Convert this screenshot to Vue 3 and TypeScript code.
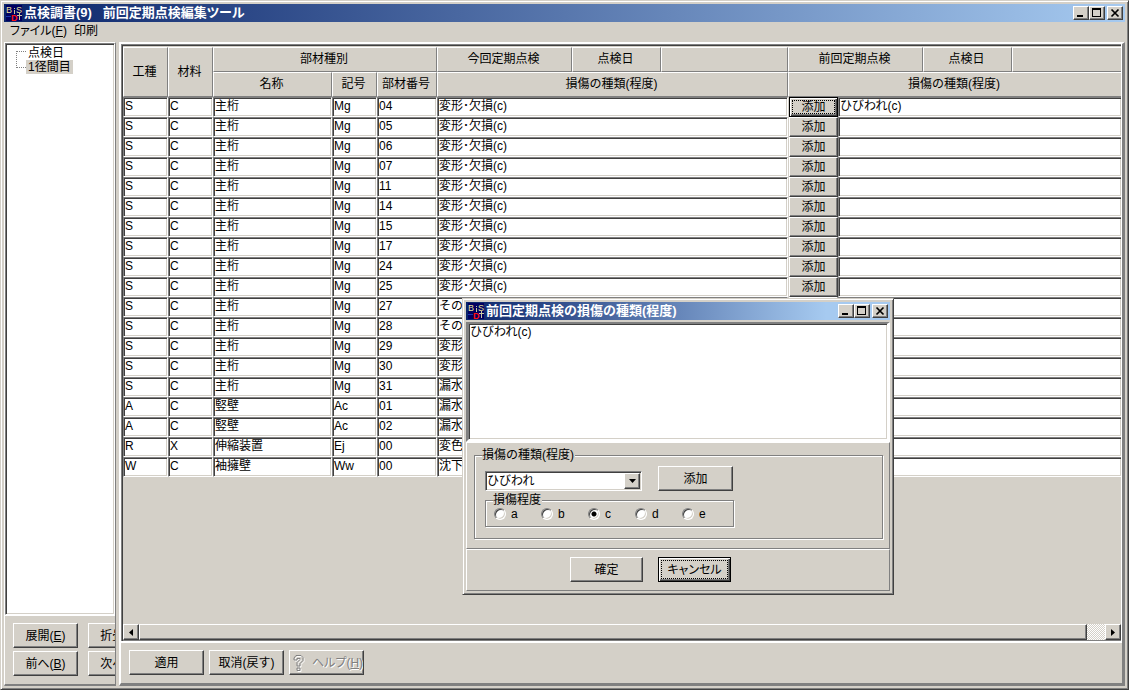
<script setup lang="ts">
import { ref } from 'vue'

interface Row {
  work: string
  material: string
  name: string
  sign: string
  no: string
  current: string
  previous: string
}

const girder = (no: string, current: string, previous = ''): Row => ({
  work: 'S', material: 'C', name: '主桁', sign: 'Mg', no, current, previous,
})

const rows: Row[] = [
  girder('04', '変形･欠損(c)', 'ひびわれ(c)'),
  ...['05', '06', '07', '11', '14', '15', '17', '24', '25'].map((n) => girder(n, '変形･欠損(c)')),
  girder('27', 'その他'),
  girder('28', 'その他'),
  girder('29', '変形･欠損(c)'),
  girder('30', '変形･欠損(c)'),
  girder('31', '漏水･滞水'),
  { work: 'A', material: 'C', name: '竪壁', sign: 'Ac', no: '01', current: '漏水･滞水', previous: '' },
  { work: 'A', material: 'C', name: '竪壁', sign: 'Ac', no: '02', current: '漏水･滞水', previous: '' },
  { work: 'R', material: 'X', name: '伸縮装置', sign: 'Ej', no: '00', current: '変色･劣化', previous: '' },
  { work: 'W', material: 'C', name: '袖擁壁', sign: 'Ww', no: '00', current: '沈下･移動', previous: '' },
]

const widths = [45, 45, 119, 45, 60, 135, 89, 127, 50, 85, 89]
const grades = ['a', 'b', 'c', 'd', 'e']
const grade = ref('c')
const damage = ref('ひびわれ')
const note = ref('ひびわれ(c)')
</script>

<template>
  <main class="window app">
    <header class="title">
      <svg class="logo" viewBox="0 0 16 16" aria-hidden="true">
        <rect width="16" height="16" fill="#000060" />
        <text x="0" y="8" fill="#e4e09a">B</text>
        <text x="10" y="8" fill="#e4e09a">S</text>
        <path d="M8.500 3v1M8.500 5v4M13.500 8v7M11 10.500h5" stroke="#c8c8a0" fill="none" />
        <path d="M0 11.500h5" stroke="#1838b0" />
        <text x="5" y="16" class="red" fill="#ff1010">D</text>
      </svg>
      <h1>点検調書(9)&nbsp;&nbsp; 前回定期点検編集ツール</h1>
      <div class="controls">
        <button type="button" aria-label="最小化"><svg viewBox="0 0 12 10"><path d="M2 8h6" stroke-width="2" /></svg></button>
        <button type="button" aria-label="最大化"><svg viewBox="0 0 12 10"><path d="M1 1h9M1.5 1v8M9.5 1v8M1 8.5h9" /><path d="M1 1h9" stroke-width="2" /></svg></button>
        <button type="button" aria-label="閉じる" class="close"><svg viewBox="0 0 12 10"><path d="M2.5 1.5l7 7M9.5 1.5l-7 7" stroke-width="1.7" /></svg></button>
      </div>
    </header>

    <nav class="menu">
      <button type="button">ファイル(<u>F</u>)</button>
      <button type="button">印刷</button>
    </nav>

    <div class="body">
      <aside class="side">
        <div class="tree">
          <span class="branch"></span>
          <ul>
            <li>点検日</li>
            <li class="selected">1径間目</li>
          </ul>
        </div>
        <div class="side-buttons">
          <button type="button" class="btn">展開(<u>E</u>)</button>
          <button type="button" class="btn">折畳(<u>C</u>)</button>
          <button type="button" class="btn">前へ(<u>B</u>)</button>
          <button type="button" class="btn">次へ(<u>N</u>)</button>
        </div>
      </aside>

      <section class="content">
        <div class="grid">
          <div class="sheet">
            <table>
              <colgroup>
                <col v-for="(w, i) in widths" :key="i" :style="{ width: w + 'px' }" />
                <col />
              </colgroup>
              <thead>
                <tr>
                  <th rowspan="2">工種</th>
                  <th rowspan="2">材料</th>
                  <th colspan="3">部材種別</th>
                  <th>今回定期点検</th>
                  <th>点検日</th>
                  <th></th>
                  <th colspan="2">前回定期点検</th>
                  <th>点検日</th>
                  <th class="last"></th>
                </tr>
                <tr>
                  <th>名称</th>
                  <th>記号</th>
                  <th>部材番号</th>
                  <th colspan="3">損傷の種類(程度)</th>
                  <th colspan="4" class="last">損傷の種類(程度)</th>
                </tr>
              </thead>
              <tbody>
                <tr v-for="(r, i) in rows" :key="i">
                  <td>{{ r.work }}</td>
                  <td>{{ r.material }}</td>
                  <td>{{ r.name }}</td>
                  <td>{{ r.sign }}</td>
                  <td>{{ r.no }}</td>
                  <td colspan="3">{{ r.current }}</td>
                  <td class="action">
                    <button type="button" class="btn" :class="{ focused: i === 0 }">添加</button>
                  </td>
                  <td colspan="3" class="last">{{ r.previous }}</td>
                </tr>
              </tbody>
            </table>
          </div>
          <div class="scroll">
            <button type="button" class="btn arrow" aria-label="左へ"><svg viewBox="0 0 4 7"><path d="M4 0v7L0 3.5z" /></svg></button>
            <div class="thumb"></div>
            <div class="track"></div>
            <button type="button" class="btn arrow" aria-label="右へ"><svg viewBox="0 0 4 7"><path d="M0 0v7l4-3.5z" /></svg></button>
          </div>
        </div>
        <footer class="actions">
          <button type="button" class="btn">適用</button>
          <button type="button" class="btn">取消(戻す)</button>
          <button type="button" class="btn help" disabled>
            <svg viewBox="0 0 14 18" aria-hidden="true">
              <path d="M2 6V4l2-2.500h5l2 2v3L8 9.500V12H5V8.500l3-3V4.500H5V6zM5 14h3v2.500H5z" fill="none" stroke="#fff" transform="translate(1 1)" />
              <path d="M2 6V4l2-2.500h5l2 2v3L8 9.500V12H5V8.500l3-3V4.500H5V6zM5 14h3v2.500H5z" fill="none" stroke="#808080" />
            </svg>
            <span>ヘルプ(<u>H</u>)</span>
          </button>
        </footer>
      </section>
    </div>

    <section class="window dialog" role="dialog" aria-labelledby="dialog-title">
      <header class="title">
        <svg class="logo" viewBox="0 0 16 16" aria-hidden="true">
          <rect width="16" height="16" fill="#000060" />
          <text x="0" y="8" fill="#e4e09a">B</text>
          <text x="10" y="8" fill="#e4e09a">S</text>
          <path d="M8.500 3v1M8.500 5v4M13.500 8v7M11 10.500h5" stroke="#c8c8a0" fill="none" />
          <path d="M0 11.500h5" stroke="#1838b0" />
          <text x="5" y="16" class="red" fill="#ff1010">D</text>
        </svg>
        <h2 id="dialog-title">前回定期点検の損傷の種類(程度)</h2>
        <div class="controls">
          <button type="button" aria-label="最小化"><svg viewBox="0 0 12 10"><path d="M2 8h6" stroke-width="2" /></svg></button>
          <button type="button" aria-label="最大化"><svg viewBox="0 0 12 10"><path d="M1 1h9M1.5 1v8M9.5 1v8M1 8.5h9" /><path d="M1 1h9" stroke-width="2" /></svg></button>
          <button type="button" aria-label="閉じる" class="close"><svg viewBox="0 0 12 10"><path d="M2.5 1.5l7 7M9.5 1.5l-7 7" stroke-width="1.7" /></svg></button>
        </div>
      </header>
      <textarea v-model="note" aria-label="損傷の種類(程度)"></textarea>
      <div class="panel">
        <fieldset class="outer">
          <legend>損傷の種類(程度)</legend>
          <div class="pick">
            <div class="combo">
              <select v-model="damage" aria-label="損傷の種類">
                <option>ひびわれ</option>
              </select>
              <span class="drop"><svg viewBox="0 0 7 4"><path d="M0 0h7L3.500 4z" /></svg></span>
            </div>
            <button type="button" class="btn">添加</button>
          </div>
          <fieldset class="inner">
            <legend>損傷程度</legend>
            <label v-for="g in grades" :key="g">
              <input v-model="grade" type="radio" name="grade" :value="g" />{{ g }}
            </label>
          </fieldset>
        </fieldset>
      </div>
      <div class="panel buttons">
        <button type="button" class="btn">確定</button>
        <button type="button" class="btn focused">キャンセル</button>
      </div>
    </section>
  </main>
</template>

<style>
body {
  margin: 0;
  background: #d4d0c8;
}
</style>

<style scoped>
* {
  box-sizing: border-box;
}
.window {
  display: flex;
  flex-direction: column;
  padding: 3px;
  background: #d4d0c8;
  border: 1px solid;
  border-color: #d4d0c8 #404040 #404040 #d4d0c8;
  box-shadow: inset 1px 1px #fff, inset -1px -1px #808080;
  font: 12px/16px "Liberation Sans", "Noto Sans CJK JP", sans-serif;
  color: #000;
}
.app {
  position: relative;
  height: 100vh;
  overflow: hidden;
}
button,
select,
textarea,
input {
  font: inherit;
  color: inherit;
  margin: 0;
  padding: 0;
  border-radius: 0;
}
.title {
  display: flex;
  align-items: center;
  height: 18px;
  flex: none;
  padding: 0 2px;
  background: linear-gradient(90deg, #0a246a, #a6caf0);
  color: #fff;
}
.dialog .title {
  background: linear-gradient(90deg, #0a246a, #a6caf0 85%);
}
.logo {
  width: 16px;
  height: 16px;
  overflow: visible;
  font-family: "Liberation Sans", sans-serif;
  font-size: 9px;
}
.logo .red {
  font-weight: bold;
}
h1,
h2 {
  flex: 1;
  margin: 0 0 0 2px;
  font-size: 13px;
  line-height: 18px;
  font-weight: bold;
  white-space: nowrap;
}
h1 {
  font-feature-settings: "palt";
}
.controls {
  display: flex;
}
.controls button {
  display: flex;
  width: 16px;
  height: 14px;
  padding: 1px;
  background: #d4d0c8;
  border: 1px solid;
  border-color: #fff #404040 #404040 #fff;
  box-shadow: inset -1px -1px #808080;
}
.controls .close {
  margin-left: 2px;
}
.controls svg {
  width: 12px;
  height: 10px;
  fill: none;
  stroke: #000;
}
.menu {
  display: flex;
  gap: 7px;
  height: 20px;
  padding: 0 6px;
  font-feature-settings: "palt";
}
.menu button {
  height: 18px;
  line-height: 18px;
  background: none;
  border: 0;
}
.body {
  display: flex;
  flex: 1;
  gap: 3px;
  min-height: 0;
}
.side {
  display: flex;
  flex-direction: column;
  width: 112px;
  overflow: hidden;
  border: 1px solid;
  border-color: #fff #808080 #808080 #fff;
  border-bottom-width: 2px;
}
.tree {
  display: flex;
  flex: 1;
  padding: 2px;
  background: #fff;
  border: 1px solid;
  border-color: #808080 #fff #fff #808080;
  box-shadow: inset 1px 1px #404040, inset -1px -1px #d4d0c8;
}
.branch {
  width: 10px;
  height: 17px;
  margin: 5px 0 0 8px;
  border: 1px dotted #808080;
  border-right: 0;
}
.tree ul {
  margin: 0;
  padding: 0;
  list-style: none;
}
.tree li {
  height: 14px;
  padding: 0 2px;
  line-height: 14px;
}
.tree .selected {
  background: #d4d0c8;
}
.side-buttons {
  display: grid;
  grid-template-columns: 65px 65px;
  gap: 3px 10px;
  padding: 7px 8px 8px;
  border-top: 1px solid #fff;
}
.btn {
  height: 25px;
  background: #d4d0c8;
  border: 1px solid;
  border-color: #fff #404040 #404040 #fff;
  box-shadow: inset -1px -1px #808080;
  line-height: 16px;
  white-space: nowrap;
}
.btn.focused {
  border-color: #000;
  box-shadow: inset 1px 1px #fff, inset -1px -1px #404040, inset -2px -2px #808080;
  outline: 1px dotted #000;
  outline-offset: -4px;
}
.content {
  display: flex;
  flex: 1;
  flex-direction: column;
  min-width: 0;
  border: 3px solid;
  border-color: #fff #808080 #808080 #fff;
  border-top-width: 2px;
  border-left-width: 2px;
}
.grid {
  display: flex;
  flex: 1;
  flex-direction: column;
  min-height: 0;
  padding: 3px 0 1px 2px;
  border-right: 1px solid #fff;
  border-bottom: 2px solid #fff;
  box-shadow: inset 1px 1px #808080, inset 2px 2px #404040, inset 0 -1px #808080;
}
.sheet {
  flex: 1;
  min-height: 0;
  overflow: hidden;
}
table {
  width: 100%;
  table-layout: fixed;
  border-collapse: separate;
  border-spacing: 0;
}
th {
  height: 25px;
  padding: 0 2px 1px 0;
  border: 1px solid;
  border-color: #fff #808080 #808080 #fff;
  font-weight: normal;
  line-height: 16px;
  vertical-align: middle;
}
td {
  height: 20px;
  padding: 0 0 2px 1px;
  background: #fff;
  border: 1px solid;
  border-color: #808080 #fff #fff #808080;
  box-shadow: inset 1px 1px #404040, inset -1px -1px #d4d0c8;
  line-height: 16px;
  vertical-align: top;
  white-space: nowrap;
  overflow: hidden;
}
.last {
  border-right: 0;
}
td.action {
  padding: 0 0 0 1px;
  background: #d4d0c8;
  border: 0;
  box-shadow: none;
}
.action .btn {
  display: block;
  width: 100%;
  height: 20px;
}
.scroll {
  display: flex;
  flex: none;
  height: 16px;
}
.arrow {
  display: flex;
  align-items: center;
  justify-content: center;
  width: 16px;
  height: 16px;
}
.arrow svg {
  width: 4px;
  height: 7px;
}
.thumb {
  flex: 1;
  border: 1px solid;
  border-color: #fff #404040 #404040 #fff;
  box-shadow: inset -1px -1px #808080;
}
.track {
  width: 18px;
  background: repeating-conic-gradient(#fff 0 25%, #d4d0c8 0 50%) 0 0 / 2px 2px;
}
.actions {
  display: flex;
  flex: none;
  gap: 5px;
  padding: 7px 8px 8px;
}
.actions .btn {
  width: 75px;
}
.help {
  display: flex;
  align-items: center;
  gap: 6px;
  padding-left: 2px;
  overflow: hidden;
  color: #808080;
  text-shadow: 1px 1px #fff;
  font-feature-settings: "palt";
}
.help svg {
  flex: none;
  width: 14px;
  height: 18px;
}
.dialog {
  position: absolute;
  top: 297px;
  left: 461px;
  width: 432px;
}
textarea {
  display: block;
  width: 100%;
  height: 120px;
  margin-top: 2px;
  padding: 0 1px;
  resize: none;
  outline: 0;
  background: #fff;
  border: 3px solid;
  border-color: #808080 #fff #fff #808080;
  border-top-width: 2px;
  box-shadow: inset 1px 1px #404040, inset -1px -1px #d4d0c8;
}
.panel {
  padding: 6px 6px 9px 7px;
  border: 1px solid;
  border-color: #fff #808080 #808080 #fff;
}
fieldset {
  min-width: 0;
  margin: 0;
  border: 1px solid #808080;
  box-shadow: 1px 1px #fff, inset 1px 1px #fff;
}
legend {
  height: 12px;
  padding: 0 1px 0 0;
  line-height: 12px;
  background: #d4d0c8;
}
.outer {
  padding: 5px 10px 11px;
}
.outer > legend {
  margin-left: -3px;
}
.pick {
  display: flex;
  align-items: flex-end;
  gap: 16px;
}
.pick .btn {
  width: 75px;
}
.combo {
  display: flex;
  width: 157px;
  height: 20px;
  padding: 1px;
  background: #fff;
  border: 1px solid;
  border-color: #808080 #fff #fff #808080;
  box-shadow: inset 1px 1px #404040, inset -1px -1px #d4d0c8;
}
.combo select {
  flex: 1;
  min-width: 0;
  appearance: none;
  background: none;
  border: 0;
  outline: 0;
}
.drop {
  display: flex;
  align-items: center;
  justify-content: center;
  width: 16px;
  background: #d4d0c8;
  border: 1px solid;
  border-color: #fff #404040 #404040 #fff;
  box-shadow: inset -1px -1px #808080;
}
.drop svg {
  width: 7px;
  height: 4px;
}
.inner {
  display: flex;
  width: 249px;
  margin-top: 3px;
  padding: 0 0 4px 8px;
}
.inner legend {
  margin-left: -1px;
}
.inner label {
  display: flex;
  flex: none;
  align-items: center;
  gap: 5px;
  width: 47px;
  height: 16px;
}
input[type="radio"] {
  width: 12px;
  height: 12px;
  appearance: none;
  border: 1px solid;
  border-color: #808080 #fff #fff #808080;
  border-radius: 50%;
  background: #fff;
  box-shadow: inset 1px 1px #404040, inset -1px -1px #d4d0c8;
}
input[type="radio"]:checked {
  background: radial-gradient(circle, #000 2px, #fff 3px);
}
.buttons {
  display: flex;
  gap: 15px;
  padding: 7px 0 8px 103px;
}
.buttons .btn {
  width: 73px;
  font-feature-settings: "palt";
}
</style>
